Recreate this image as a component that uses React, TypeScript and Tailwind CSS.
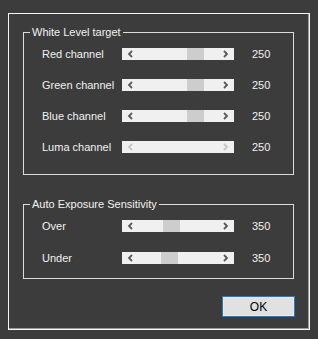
import type { ReactNode } from 'react'

type Row = { label: string; value: number; thumb?: number; disabled?: boolean }

const white: Row[] = [
  { label: 'Red channel', value: 250, thumb: 65 },
  { label: 'Green channel', value: 250, thumb: 65 },
  { label: 'Blue channel', value: 250, thumb: 65 },
  { label: 'Luma channel', value: 250, disabled: true },
]

const exposure: Row[] = [
  { label: 'Over', value: 350, thumb: 41 },
  { label: 'Under', value: 350, thumb: 39 },
]

export default function App() {
  return (
    <div
      className="h-[339px] w-[318px] bg-[#3c3c3c] pl-[8px] pt-[13px] text-[11px] text-[#f2f2f2]"
      style={{ fontFamily: '"Liberation Sans", Arial, sans-serif' }}
    >
      <div className="h-[317px] w-[302px] border border-[#f4f4f4] shadow-[inset_-1px_-1px_0_#9a9a9a]">
        <div className="flex flex-col px-[14px] pt-[12px]">
          <Group title="White Level target" className="pb-[17px]">
            <div className="flex flex-col gap-[11px]">
              {white.map((r) => (
                <SliderRow key={r.label} row={r} />
              ))}
            </div>
          </Group>

          <Group title="Auto Exposure Sensitivity" className="mt-[23px] pb-[10px]">
            <div className="flex flex-col gap-[12px]">
              {exposure.map((r) => (
                <SliderRow key={r.label} row={r} />
              ))}
            </div>
          </Group>

          <div className="mt-[17px] flex justify-end">
            <button className="h-[21px] w-[73px] border border-[#1f7ad0] bg-[#e1e1e1] text-[12px] text-black shadow-[inset_0_0_0_1px_#e8e8e8]">
              OK
            </button>
          </div>
        </div>
      </div>
    </div>
  )
}

function Group({ title, className, children }: { title: string; className?: string; children: ReactNode }) {
  return (
    <fieldset className={`w-[271px] border border-[#dcdcdc] ${className ?? ''}`}>
      <legend className="ml-[6px] px-[2px] leading-[13px]">{title}</legend>
      <div className="pl-[18px] pt-[5px]">{children}</div>
    </fieldset>
  )
}

function SliderRow({ row }: { row: Row }) {
  const arrow = row.disabled ? '#c6c6c6' : '#5a5a5a'
  return (
    <div className="flex h-[20px] items-center">
      <span className="w-[80px]">{row.label}</span>
      <div className="relative flex h-[12px] w-[112px] items-center justify-between bg-[#f0f0f0] px-[5px]">
        {row.thumb !== undefined && (
          <div
            className="absolute top-0 h-[12px] w-[17px] bg-[#cdcdcd]"
            style={{ left: row.thumb }}
          />
        )}
        <svg width="7" height="8" viewBox="0 0 7 8" className="relative">
          <polyline points="5,1 2,4 5,7" fill="none" stroke={arrow} strokeWidth="1.8" />
        </svg>
        <svg width="7" height="8" viewBox="0 0 7 8" className="relative">
          <polyline points="2,1 5,4 2,7" fill="none" stroke={arrow} strokeWidth="1.8" />
        </svg>
      </div>
      <span className="ml-[18px]">{row.value}</span>
    </div>
  )
}
